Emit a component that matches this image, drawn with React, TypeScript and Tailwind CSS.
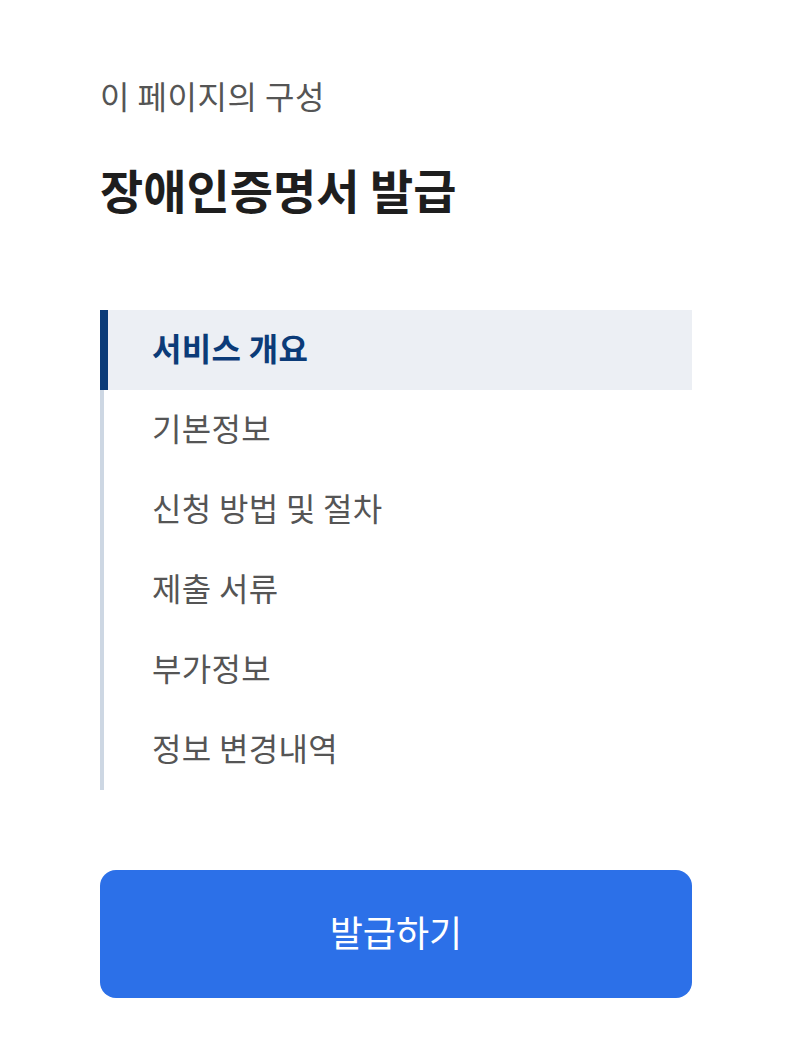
import { useState } from "react";

const sections = ["서비스 개요", "기본정보", "신청 방법 및 절차", "제출 서류", "부가정보", "정보 변경내역"];

const App = () => {
  const [active, setActive] = useState(0);

  return (
    <div className="min-h-screen bg-white font-['Noto_Sans_CJK_KR','Noto_Sans',sans-serif]">
      <div className="w-[592px] ml-[100px] pt-[72px] pb-16">
        {/* Heading */}
        <p className="text-[32px] leading-[46px] text-[#555555] tracking-[0.5px]">이 페이지의 구성</p>
        <h1 className="mt-[38px] text-[47px] leading-[66px] font-bold text-[#1e1e1e]">
          장애인증명서 발급
        </h1>

        {/* Section nav */}
        <ul className="mt-[88px] border-l-4 border-[#cdd7e3]">
          {sections.map((label, i) => (
            <li key={label}>
              <button
                onClick={() => setActive(i)}
                className={
                  i === active
                    ? "flex items-center w-[calc(100%+4px)] h-20 -ml-1 pl-11 pb-[6px] border-l-8 border-[#0b3b78] bg-[#eceff4] text-[32px] font-bold text-[#0b3b78] text-left tracking-[0.3px]"
                    : "flex items-center w-full h-20 pl-12 pb-[6px] text-[32px] text-[#555555] text-left tracking-[0.3px]"
                }
              >
                {label}
              </button>
            </li>
          ))}
        </ul>

        {/* Action */}
        <button className="mt-20 w-full h-32 pb-[6px] rounded-2xl bg-[#2c70e8] text-white text-[36px]">
          발급하기
        </button>
      </div>
    </div>
  );
};

export default App;
